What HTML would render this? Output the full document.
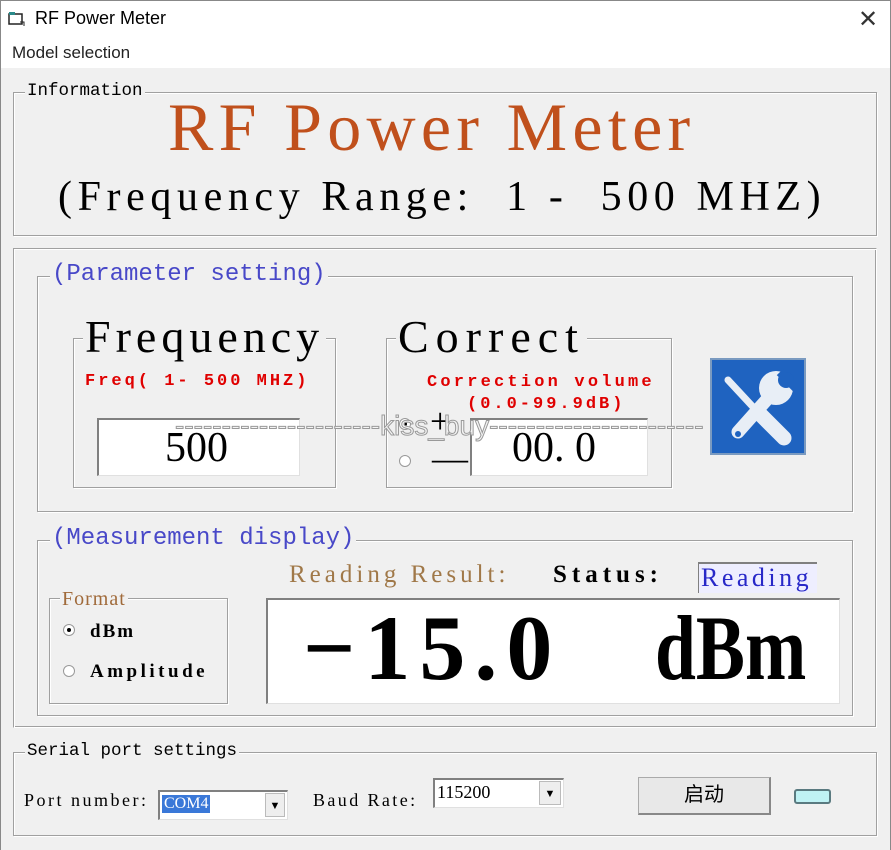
<!DOCTYPE html>
<html><head><meta charset="utf-8"><style>
*{margin:0;padding:0;box-sizing:border-box}
body{width:891px;height:850px;background:#f0f0f0;position:relative;overflow:hidden;font-family:"Liberation Serif","Noto Serif CJK SC",serif}
.a{position:absolute;white-space:nowrap}
.g{position:absolute;border:1px solid #a0a0a0;box-shadow:1px 1px 0 #fff inset,1px 1px 0 #fff}
.lbl{position:absolute;background:#f0f0f0;padding:0 2px;line-height:1}
.sunk{position:absolute;background:#fff;border-top:2px solid #808080;border-left:2px solid #808080;border-right:1px solid #e0e0e0;border-bottom:1px solid #e0e0e0}
.rad{position:absolute;width:12px;height:12px;border-radius:50%;border:1px solid #999;background:#fff}
.mono{font-family:"Liberation Mono","Noto Sans CJK SC",monospace}
</style></head><body>
<div class="a" style="left:0;top:0;width:891px;height:68px;background:#fff;border-left:1px solid #888;border-right:1px solid #888;border-top:1px solid #888"></div>
<svg class="a" style="left:8px;top:11px" width="18" height="16"><rect x="1" y="3" width="13" height="10" fill="none" stroke="#222" stroke-width="1.5"/><rect x="1" y="1" width="6" height="3" fill="#2a8a8a"/><path d="M12 11h4v4" stroke="#222" fill="none"/></svg>
<div class="a" style="left:35px;top:8px;font:18px 'Liberation Sans',sans-serif;color:#000">RF Power Meter</div>
<div class="a" style="left:858px;top:5px;font:24px 'Liberation Sans',sans-serif;color:#333">✕</div>
<div class="a" style="left:12px;top:43px;font:17px 'Liberation Sans',sans-serif;color:#222">Model selection</div>
<div class="a" style="left:0;top:68px;width:1px;height:782px;background:#888"></div>
<div class="a" style="right:0;top:68px;width:1px;height:782px;background:#888"></div>

<div class="g" style="left:13px;top:92px;width:864px;height:144px"></div>
<div class="lbl mono" style="left:25px;top:83px;font-size:17.5px">Information</div>
<div class="a" style="left:168px;top:93px;font-size:68px;color:#c0501c;letter-spacing:5.3px;line-height:1">RF Power Meter</div>
<div class="a" style="left:58px;top:176px;font-size:42px;color:#000;letter-spacing:5.6px;line-height:1">(Frequency Range:&nbsp; 1 -&nbsp; 500 MHZ)</div>

<div class="a" style="left:13px;top:248px;width:864px;height:480px;border-top:1px solid #a0a0a0;border-left:1px solid #a0a0a0;border-right:1px solid #fff;border-bottom:1px solid #fff;box-shadow:1px 1px 0 #fff inset,-1px -1px 0 #a0a0a0 inset"></div>
<div class="g" style="left:37px;top:276px;width:816px;height:236px"></div>
<div class="lbl mono" style="left:50px;top:263px;font-size:24px;color:#4848c8">(Parameter setting)</div>

<div class="g" style="left:73px;top:338px;width:263px;height:150px"></div>
<div class="lbl" style="left:83px;top:314px;font-size:46px;letter-spacing:5px">Frequency</div>
<div class="a" style="left:85px;top:372px;font:bold 17px 'Liberation Mono',monospace;color:#e00000;letter-spacing:3px">Freq( 1- 500 MHZ)</div>
<div class="sunk" style="left:97px;top:418px;width:203px;height:58px"></div>
<div class="a" style="left:165px;top:424px;font-size:42px">500</div>

<div class="g" style="left:386px;top:338px;width:286px;height:150px"></div>
<div class="lbl" style="left:396px;top:314px;font-size:46px;letter-spacing:7px">Correct</div>
<div class="a" style="left:427px;top:373px;font:bold 17px 'Liberation Mono',monospace;color:#e00000;letter-spacing:3.2px">Correction volume</div>
<div class="a" style="left:467px;top:395px;font:bold 17px 'Liberation Mono',monospace;color:#e00000;letter-spacing:3px">(0.0-99.9dB)</div>
<div class="rad" style="left:399px;top:418px"><div style="width:4px;height:4px;background:#000;border-radius:50%;margin:3px"></div></div>
<div class="rad" style="left:399px;top:455px"></div>
<div class="a" style="left:430px;top:400px;font-size:36px">+</div>
<div class="a" style="left:432px;top:437px;font-size:36px">—</div>
<div class="sunk" style="left:470px;top:418px;width:178px;height:58px"></div>
<div class="a" style="left:512px;top:424px;font-size:42px">00. 0</div>
<div class="a" style="left:175px;top:410px;font:28px 'Liberation Sans',sans-serif;color:#f4f4f4;-webkit-text-stroke:1px #999">----------------------kiss_buy-----------------------</div>

<svg class="a" style="left:710px;top:358px" width="96" height="97" viewBox="0 0 96 97"><rect x="1" y="1" width="94" height="95" fill="#1f63c0" stroke="#7a9ac0" stroke-width="2"/>
<g stroke="#e8eef6" stroke-linecap="round" fill="none">
<path d="M18 22L44 50" stroke-width="7"/>
<path d="M50 56L74 80" stroke-width="15"/>
<path d="M60 38L28 74" stroke-width="13"/>
</g>
<circle cx="66" cy="30" r="17" fill="#e8eef6"/>
<circle cx="76" cy="22" r="8" fill="#1f63c0"/>
<path d="M70 14L86 30" stroke="#1f63c0" stroke-width="9"/>
<circle cx="28" cy="76" r="3" fill="#1f63c0"/></svg>

<div class="g" style="left:37px;top:540px;width:816px;height:176px"></div>
<div class="lbl mono" style="left:50px;top:527px;font-size:24px;color:#4848c8">(Measurement display)</div>
<div class="g" style="left:49px;top:598px;width:179px;height:106px"></div>
<div class="lbl" style="left:60px;top:589px;font-size:20px;color:#a06a3a;letter-spacing:1px">Format</div>
<div class="rad" style="left:63px;top:624px"><div style="width:4px;height:4px;background:#000;border-radius:50%;margin:3px"></div></div>
<div class="a" style="left:90px;top:621px;font:bold 19px 'Liberation Serif',serif;letter-spacing:2px">dBm</div>
<div class="rad" style="left:63px;top:665px"></div>
<div class="a" style="left:90px;top:661px;font:bold 19px 'Liberation Serif',serif;letter-spacing:3.5px">Amplitude</div>
<div class="a" style="left:289px;top:561px;font-size:25px;color:#a07848;letter-spacing:4px">Reading Result:</div>
<div class="a" style="left:553px;top:561px;font:bold 25px 'Liberation Serif',serif;letter-spacing:5px">Status:</div>
<div class="a" style="left:698px;top:562px;width:119px;height:31px;border-top:2px solid #808080;border-left:1px solid #808080;background:#eef"></div>
<div class="a" style="left:701px;top:563px;font-size:26px;color:#2828c8;letter-spacing:3.5px">Reading</div>
<div class="sunk" style="left:266px;top:598px;width:574px;height:106px"></div>
<div class="a" style="left:303px;top:602px;font:bold 92px 'Liberation Serif',serif;line-height:1;letter-spacing:9px">−15.0</div>
<div class="a" style="left:655px;top:602px;font:bold 92px 'Liberation Serif',serif;line-height:1;transform:scaleX(0.8);transform-origin:left">dBm</div>

<div class="g" style="left:13px;top:752px;width:864px;height:84px"></div>
<div class="lbl mono" style="left:25px;top:743px;font-size:17.5px">Serial port settings</div>
<div class="a" style="left:24px;top:790px;font-size:18px;letter-spacing:2.5px">Port number:</div>
<div class="sunk" style="left:158px;top:790px;width:130px;height:30px"></div>
<div class="a" style="left:162px;top:795px;background:#3a78d8;color:#fff;font-size:16px;padding:0 2px">COM4</div>
<div class="a" style="left:265px;top:793px;width:20px;height:24px;background:#eee;border:1px solid #bbb;font-size:11px;text-align:center;line-height:24px">▼</div>
<div class="a" style="left:313px;top:790px;font-size:18px;letter-spacing:2.4px">Baud Rate:</div>
<div class="sunk" style="left:433px;top:778px;width:131px;height:30px"></div>
<div class="a" style="left:437px;top:782px;font-size:18px">115200</div>
<div class="a" style="left:539px;top:781px;width:22px;height:24px;background:#eee;border:1px solid #bbb;font-size:11px;text-align:center;line-height:24px">▼</div>
<div class="a" style="left:638px;top:777px;width:133px;height:38px;background:#e8e8e8;border:1px solid #aaa;border-right:2px solid #888;border-bottom:2px solid #888;text-align:center;line-height:34px;font:20px 'Noto Sans CJK SC',sans-serif">启动</div>
<div class="a" style="left:794px;top:789px;width:37px;height:15px;background:#bff2f4;border:2px solid #5a7a80;border-radius:3px"></div>
</body></html>
